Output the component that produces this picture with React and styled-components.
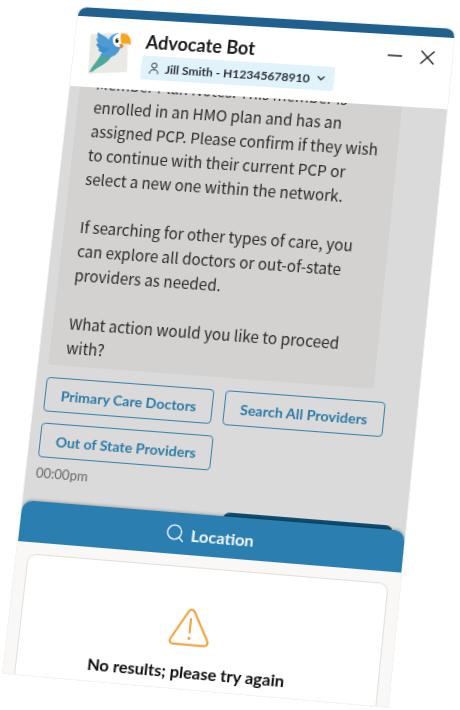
import React from "react";
import styled, { createGlobalStyle } from "styled-components";

const GlobalStyle = createGlobalStyle`
  * {
    box-sizing: border-box;
  }
  body {
    margin: 0;
    background: #fff;
    font-family: Lato, "Liberation Sans", sans-serif;
  }
`;

const Page = styled.div`
  min-height: 100vh;
  overflow: hidden;
`;

// the whole widget is shown tilted, leaning back a little
const Widget = styled.main`
  width: calc(100% - 86px);
  transform-origin: 0 0;
  transform: matrix3d(
    0.985415, 0.057553, 0, -0.000043807,
    -0.115271, 0.982347, 0, -0.000039739,
    0, 0, 1, 0,
    79, 7, 0, 1
  );
  border-radius: 8px 8px 0 0;
  overflow: hidden;
  outline: 1px solid #f1f3f4;
`;

const Header = styled.header`
  display: flex;
  height: 80px;
  padding: 8px 16px 0 14px;
  border-top: 9px solid #1f608e;
  background: #fff;
`;

const HeaderText = styled.div`
  flex: 1;
  margin-left: 10px;
`;

const Title = styled.h1`
  margin: 0;
  padding-left: 2px;
  font-size: 18px;
  line-height: 28px;
  font-weight: 700;
  color: #1b1c1e;
`;

const MemberPicker = styled.label`
  display: inline-flex;
  align-items: center;
  gap: 5px;
  height: 24px;
  padding: 0 7px;
  border-radius: 3px;
  background: #e0f2fa;
  color: #2d3740;
`;

const MemberSelect = styled.select`
  appearance: none;
  border: 0;
  padding: 0;
  background: none;
  font-family: inherit;
  font-size: 12px;
  font-weight: 700;
  color: #2d3338;
`;

const WindowButtons = styled.div`
  display: flex;
  gap: 16px;
  padding-top: 5px;
`;

const IconButton = styled.button`
  display: flex;
  width: 16px;
  height: 16px;
  padding: 0;
  border: 0;
  background: none;
  color: #222;
  cursor: pointer;
`;

const Chat = styled.section`
  display: flex;
  flex-direction: column;
  justify-content: flex-end;
  height: 422px;
  padding: 0 12px 0 10px;
  overflow: hidden;
  background: #dadada;
`;

const Bubble = styled.div`
  width: 320px;
  max-width: 100%;
  padding: 16px 16px 6px;
  border-radius: 3px;
  background: #d3d2d0;
`;

const Paragraph = styled.p`
  margin: 0 0 24px;
  font-family: "Noto Sans CJK SC", sans-serif;
  font-size: 15px;
  line-height: 24px;
  color: #2b2b2b;
  &:last-child {
    margin-bottom: 0;
  }
`;

const Actions = styled.div`
  display: flex;
  flex-wrap: wrap;
  gap: 11px;
  margin-top: 12px;
`;

const ActionButton = styled.button`
  height: 34px;
  padding: 0 15px;
  border: 1px solid #3583ab;
  border-radius: 4px;
  background: transparent;
  font-family: inherit;
  font-size: 14px;
  font-weight: 700;
  color: #2b7ba6;
  cursor: pointer;
`;

const Time = styled.time`
  margin-top: 5px;
  font-size: 13px;
  line-height: 20px;
  color: #686868;
`;

const Reply = styled.div`
  align-self: flex-end;
  flex-shrink: 0;
  width: 165px;
  height: 14px;
  margin-top: 14px;
  border-radius: 7px 7px 0 0;
  background: #104e72;
`;

const Drawer = styled.section`
  position: relative;
  margin-top: -10px;
  border-radius: 10px 10px 0 0;
  background: #faf8f6;
  box-shadow: 0 -1px 3px rgba(0, 0, 0, 0.25);
`;

const DrawerHeader = styled.h2`
  display: flex;
  align-items: center;
  justify-content: center;
  gap: 6px;
  height: 40px;
  margin: 0;
  border-radius: 10px 10px 0 0;
  background: #2a7eb0;
  font-size: 16px;
  font-weight: 700;
  color: #f2f8fb;
`;

const DrawerBody = styled.div`
  padding: 11px 11px 0;
`;

const ResultCard = styled.div`
  display: flex;
  flex-direction: column;
  align-items: center;
  gap: 12px;
  height: 117px;
  padding: 38px 20px 0 0;
  border: 1px solid #e2dfdb;
  border-bottom: 0;
  border-radius: 9px 9px 0 0;
  background: #fff;
`;

const ResultText = styled.p`
  margin: 0;
  font-size: 16px;
  line-height: 24px;
  font-weight: 700;
  color: #0c0c0c;
`;

const Parrot = () => (
  <svg width="45" height="50" viewBox="25 15 135 150" aria-hidden="true">
    <g transform="rotate(-4 92 90)">
      <path d="M31 40L143 36L145 155L28 160Z" fill="#ebe9e6" />
      <path d="M68 96C58 116 42 132 31 156L41 153C55 139 84 132 97 107Z" fill="#4ca99a" />
      <path
        d="M52 34C65 44 79 47 86 57C89 46 99 38 114 38C124 44 128 66 121 84C116 100 103 111 88 110C77 110 68 106 62 107L67 95C61 94 57 91 55 87L61 86C55 82 51 76 49 69L56 70C51 64 49 58 49 51L54 54C51 48 51 41 52 34Z"
        fill="#4d9bd4"
      />
      <path d="M56 70C68 79 78 83 91 82C84 94 75 96 67 95L55 87L61 86C57 82 52 77 49 69Z" fill="#418ecb" />
      <path d="M124 39C108 37 98 46 98 58C98 73 110 81 124 80L126 68Z" fill="#fff" />
      <path d="M122 40C142 36 155 49 152 74C145 69 136 69 126 70C121 59 120 49 122 40Z" fill="#f9a51c" />
      <path d="M118 72C123 69 130 71 131 76C129 83 123 86 119 82C122 79 121 76 118 72Z" fill="#e27e2b" />
      <ellipse cx="111" cy="60" rx="5" ry="7" fill="#1c2229" />
      <circle cx="114" cy="57" r="2" fill="#fff" />
    </g>
  </svg>
);

const LineIcon = styled.svg`
  fill: none;
  stroke: currentColor;
  stroke-linecap: round;
  stroke-linejoin: round;
  flex-shrink: 0;
`;

const App = () => (
  <Page>
    <GlobalStyle />
    <Widget>
      <Header>
        <Parrot />
        <HeaderText>
          <Title>Advocate Bot</Title>
          <MemberPicker>
            <LineIcon width="12" height="14" viewBox="0 0 12 14">
              <circle cx="6" cy="4.5" r="2.6" />
              <path d="M2 12.5V11.5C2 9.7 3.5 8.7 6 8.7C8.500 8.7 10 9.7 10 11.5V12.5" />
            </LineIcon>
            <MemberSelect aria-label="Member">
              <option>Jill Smith - H12345678910</option>
            </MemberSelect>
            <LineIcon width="12" height="12" viewBox="0 0 12 12" strokeWidth="1.3">
              <path d="M3 4.500L6 7.500L9 4.500" />
            </LineIcon>
          </MemberPicker>
        </HeaderText>
        <WindowButtons>
          <IconButton aria-label="Minimize">
            <LineIcon width="16" height="16" viewBox="0 0 16 16" strokeWidth="1.4">
              <path d="M1.500 8H14.500" />
            </LineIcon>
          </IconButton>
          <IconButton aria-label="Close">
            <LineIcon width="16" height="16" viewBox="0 0 16 16" strokeWidth="1.4">
              <path d="M2 2L14 14M14 2L2 14" />
            </LineIcon>
          </IconButton>
        </WindowButtons>
      </Header>
      <Chat>
        <Bubble>
          <Paragraph>
            Member Plan Notes: This member is enrolled in an HMO plan and has an
            assigned PCP. Please confirm if they wish to continue with their
            current PCP or select a new one within the network.
          </Paragraph>
          <Paragraph>
            If searching for other types of care, you can explore all doctors or
            out-of-state providers as needed.
          </Paragraph>
          <Paragraph>What action would you like to proceed with?</Paragraph>
        </Bubble>
        <Actions>
          <ActionButton>Primary Care Doctors</ActionButton>
          <ActionButton>Search All Providers</ActionButton>
          <ActionButton>Out of State Providers</ActionButton>
        </Actions>
        <Time>00:00pm</Time>
        <Reply />
      </Chat>
      <Drawer>
        <DrawerHeader>
          <LineIcon width="18" height="18" viewBox="0 0 18 18" strokeWidth="1.3">
            <circle cx="8" cy="8" r="6.800" />
            <path d="M13 13L16.500 16.500" />
          </LineIcon>
          Location
        </DrawerHeader>
        <DrawerBody>
          <ResultCard>
            <LineIcon width="40" height="38" viewBox="0 0 40 38" strokeWidth="2" color="#f0a03c">
              <path d="M17.300 3.500C18.500 1.400 21.500 1.400 22.700 3.500L38 31C39.100 33.200 37.700 35.700 35.200 35.700H4.800C2.300 35.700 0.900 33.200 2 31Z" />
              <path d="M20 11V24" />
              <path d="M20 29.500V29.600" strokeWidth="3" />
            </LineIcon>
            <ResultText>No results; please try again</ResultText>
          </ResultCard>
        </DrawerBody>
      </Drawer>
    </Widget>
  </Page>
);

export default App;
